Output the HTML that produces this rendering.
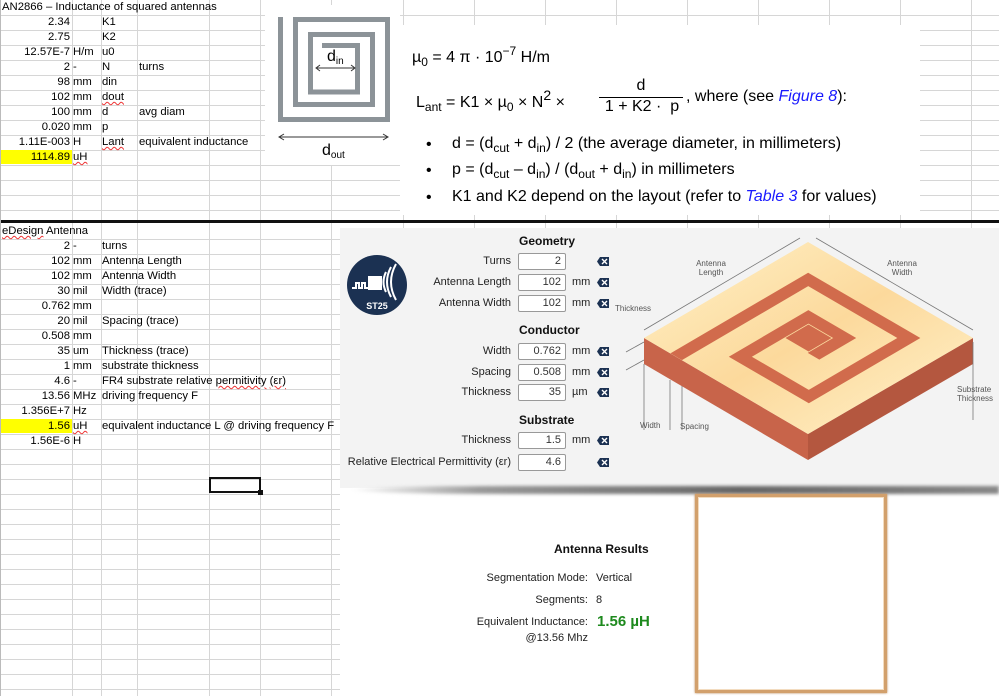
<!DOCTYPE html>
<html><head><meta charset="utf-8"><style>
*{margin:0;padding:0;box-sizing:border-box}
body{width:999px;height:696px;overflow:hidden;background:#fff;font-family:"Liberation Sans",Arial,sans-serif;position:relative;color:#000}
.t{position:absolute;font-size:11.3px;line-height:15px;white-space:nowrap}
.r{text-align:right}
.p{position:absolute;font-size:11px;line-height:14px;white-space:nowrap;color:#222}
.in{position:absolute;width:48px;height:17px;background:#fff;border:1px solid #999;border-radius:2px;font-size:11px;line-height:15px;text-align:right;padding-right:4px;color:#333}
.h{position:absolute;font-size:12px;font-weight:bold;color:#111}
.f{position:absolute;font-size:16px;white-space:nowrap;line-height:18px}
sub{font-size:12px;vertical-align:-4px}
sup{font-size:12px;vertical-align:7px}
.sq{text-decoration:underline wavy #e33;text-decoration-thickness:1px}
</style></head><body>
<svg width="999" height="696" style="position:absolute;left:0;top:0">
<g stroke="#d6d6d6" stroke-width="1">
<path d="M0 15.5H999M0 30.5H999M0 45.5H999M0 60.5H999M0 75.5H999M0 90.5H999M0 105.5H999M0 120.5H999M0 135.5H999M0 150.5H999M0 165.5H999M0 180.5H999M0 195.5H999M0 210.5H999"/>
<path d="M0 239.5H999M0 254.5H999M0 269.5H999M0 284.5H999M0 299.5H999M0 314.5H999M0 329.5H999M0 344.5H999M0 359.5H999M0 374.5H999M0 389.5H999M0 404.5H999M0 419.5H999M0 434.5H999M0 449.5H999M0 464.5H999M0 479.5H999M0 494.5H999M0 509.5H999M0 524.5H999M0 539.5H999M0 554.5H999M0 569.5H999M0 584.5H999M0 599.5H999M0 614.5H999M0 629.5H999M0 644.5H999M0 659.5H999M0 674.5H999M0 689.5H999"/>
<path d="M72.5 0V696M101.5 0V696M137.5 0V696M209.5 0V696M260.5 0V696M331.5 0V696M403.5 0V696M474.5 0V696M545.5 0V696M616.5 0V696M687.5 0V696M758.5 0V696M829.5 0V696M900.5 0V696M971.5 0V696"/>
</g>
<rect x="0" y="220" width="999" height="3" fill="#111"/>
<rect x="0" y="0" width="1" height="696" fill="#bbb"/>
</svg>
<div style="position:absolute;left:400px;top:25px;width:520px;height:190px;background:#fff"></div>
<div style="position:absolute;left:265px;top:5px;width:135px;height:160px;background:#fff"></div>

<div class="t" style="left:2px;top:0">AN2866 – Inductance of squared antennas</div>
<div class="t r" style="left:0;width:70px;top:15px">2.34</div><div class="t" style="left:102px;top:15px">K1</div>
<div class="t r" style="left:0;width:70px;top:30px">2.75</div><div class="t" style="left:102px;top:30px">K2</div>
<div class="t r" style="left:0;width:70px;top:45px">12.57E-7</div><div class="t" style="left:73px;top:45px">H/m</div><div class="t" style="left:102px;top:45px">u0</div>
<div class="t r" style="left:0;width:70px;top:60px">2</div><div class="t" style="left:73px;top:60px">-</div><div class="t" style="left:102px;top:60px">N</div><div class="t" style="left:139px;top:60px">turns</div>
<div class="t r" style="left:0;width:70px;top:75px">98</div><div class="t" style="left:73px;top:75px">mm</div><div class="t" style="left:102px;top:75px">din</div>
<div class="t r" style="left:0;width:70px;top:90px">102</div><div class="t" style="left:73px;top:90px">mm</div><div class="t" style="left:102px;top:90px"><span class="sq">dout</span></div>
<div class="t r" style="left:0;width:70px;top:105px">100</div><div class="t" style="left:73px;top:105px">mm</div><div class="t" style="left:102px;top:105px">d</div><div class="t" style="left:139px;top:105px">avg diam</div>
<div class="t r" style="left:0;width:70px;top:120px">0.020</div><div class="t" style="left:73px;top:120px">mm</div><div class="t" style="left:102px;top:120px">p</div>
<div class="t r" style="left:0;width:70px;top:135px">1.11E-003</div><div class="t" style="left:73px;top:135px">H</div><div class="t" style="left:102px;top:135px"><span class="sq">Lant</span></div><div class="t" style="left:139px;top:135px">equivalent inductance</div>
<div class="t r" style="left:1px;width:71px;top:150px;background:#ffff00;padding-right:2px;height:14px">1114.89</div><div class="t" style="left:73px;top:150px"><span class="sq">uH</span></div>

<svg width="999" height="220" style="position:absolute;left:0;top:0">
<path d="M280.5 17V119.5H387.5V19.5H295.5V104.5H372.5V34.5H310.5V92H357.5V45.5H322" fill="none" stroke="#8c9398" stroke-width="5"/>
<path d="M317 68H354M320 65L316 68L320 71M351 65L355 68L351 71" fill="none" stroke="#333" stroke-width="1"/>
<path d="M280 137H387M284 134L279 137L284 140M383 134L388 137L383 140" fill="none" stroke="#333" stroke-width="1"/>
</svg>
<div class="f" style="left:327px;top:48px">d<sub style="font-size:10px;vertical-align:-3px">in</sub></div>
<div class="f" style="left:322px;top:142px">d<sub style="font-size:10px;vertical-align:-3px">out</sub></div>

<div class="f" style="left:412px;top:42px">µ<sub>0</sub> = 4 π · 10<sup>−7</sup> H/m</div>
<div class="f" style="left:416px;top:86px">L<sub>ant</sub> = K1 × µ<sub>0</sub> × N<sup style="font-size:14px">2</sup> ×</div>
<div class="f" style="left:599px;top:77px;width:84px;text-align:center">d</div>
<div style="position:absolute;left:599px;top:97px;width:84px;height:1px;background:#000"></div>
<div class="f" style="left:599px;top:98px;width:86px;text-align:center">1 + K2 ·&nbsp; p</div>
<div class="f" style="left:686px;top:88px">, where (see <i style="color:#1a1aff">Figure 8</i>):</div>
<div class="f" style="left:426px;top:136px">•</div><div class="f" style="left:452px;top:135px">d = (d<sub>cut</sub> + d<sub>in</sub>) / 2 (the average diameter, in millimeters)</div>
<div class="f" style="left:426px;top:162px">•</div><div class="f" style="left:452px;top:161px">p = (d<sub>cut</sub> – d<sub>in</sub>) / (d<sub>out</sub> + d<sub>in</sub>) in millimeters</div>
<div class="f" style="left:426px;top:189px">•</div><div class="f" style="left:452px;top:188px">K1 and K2 depend on the layout (refer to <i style="color:#1a1aff">Table 3</i> for values)</div>

<div class="t" style="left:2px;top:224px"><span class="sq">eDesign</span> Antenna</div>
<div class="t r" style="left:0;width:70px;top:239px">2</div><div class="t" style="left:73px;top:239px">-</div><div class="t" style="left:102px;top:239px">turns</div>
<div class="t r" style="left:0;width:70px;top:254px">102</div><div class="t" style="left:73px;top:254px">mm</div><div class="t" style="left:102px;top:254px">Antenna Length</div>
<div class="t r" style="left:0;width:70px;top:269px">102</div><div class="t" style="left:73px;top:269px">mm</div><div class="t" style="left:102px;top:269px">Antenna Width</div>
<div class="t r" style="left:0;width:70px;top:284px">30</div><div class="t" style="left:73px;top:284px">mil</div><div class="t" style="left:102px;top:284px">Width (trace)</div>
<div class="t r" style="left:0;width:70px;top:299px">0.762</div><div class="t" style="left:73px;top:299px">mm</div>
<div class="t r" style="left:0;width:70px;top:314px">20</div><div class="t" style="left:73px;top:314px">mil</div><div class="t" style="left:102px;top:314px">Spacing (trace)</div>
<div class="t r" style="left:0;width:70px;top:329px">0.508</div><div class="t" style="left:73px;top:329px">mm</div>
<div class="t r" style="left:0;width:70px;top:344px">35</div><div class="t" style="left:73px;top:344px">um</div><div class="t" style="left:102px;top:344px">Thickness (trace)</div>
<div class="t r" style="left:0;width:70px;top:359px">1</div><div class="t" style="left:73px;top:359px">mm</div><div class="t" style="left:102px;top:359px">substrate thickness</div>
<div class="t r" style="left:0;width:70px;top:374px">4.6</div><div class="t" style="left:73px;top:374px">-</div><div class="t" style="left:102px;top:374px">FR4 substrate relative <span class="sq">permitivity</span> <span class="sq">(εr)</span></div>
<div class="t r" style="left:0;width:70px;top:389px">13.56</div><div class="t" style="left:73px;top:389px">MHz</div><div class="t" style="left:102px;top:389px">driving frequency F</div>
<div class="t r" style="left:0;width:70px;top:404px">1.356E+7</div><div class="t" style="left:73px;top:404px">Hz</div>
<div class="t r" style="left:1px;width:71px;top:419px;background:#ffff00;padding-right:2px;height:14px">1.56</div><div class="t" style="left:73px;top:419px"><span class="sq">uH</span></div><div class="t" style="left:102px;top:419px">equivalent inductance L @ driving frequency F</div>
<div class="t r" style="left:0;width:70px;top:434px">1.56E-6</div><div class="t" style="left:73px;top:434px">H</div>
<div style="position:absolute;left:209px;top:477px;width:52px;height:16px;border:2px solid #111"></div>
<div style="position:absolute;left:258px;top:490px;width:5px;height:5px;background:#111"></div>

<div style="position:absolute;left:340px;top:228px;width:659px;height:260px;background:#f3f3f3"></div>
<div style="position:absolute;left:340px;top:488px;width:659px;height:208px;background:#fff"></div>
<div style="position:absolute;left:350px;top:486px;width:649px;height:8px;background:linear-gradient(90deg,#fff 0%,#999 20%,#666 60%,#888 100%);border-radius:50% 0 0 50%/100% 0 0 100%;filter:blur(1.5px)"></div>

<svg width="70" height="70" style="position:absolute;left:342px;top:250px">
<circle cx="35" cy="35" r="30" fill="#1b3152"/>
<path d="M10 38h4v-5h3v5h3v-5h3v5h4" fill="none" stroke="#fff" stroke-width="2"/>
<rect x="26" y="26" width="14" height="14" fill="#fff"/>
<path d="M44 22q-5 10 0 20M49 17q-8 15 0 30M54 14q-10 18 0 36" fill="none" stroke="#fff" stroke-width="2"/>
<text x="35" y="59" font-size="9" font-weight="bold" fill="#fff" text-anchor="middle" font-family="Liberation Sans">ST25</text>
</svg>

<div class="h" style="left:519px;top:234px">Geometry</div>
<div class="p r" style="left:380px;width:131px;top:254px">Turns</div><div class="in" style="left:518px;top:253px">2</div>
<div class="p r" style="left:380px;width:131px;top:275px">Antenna Length</div><div class="in" style="left:518px;top:274px">102</div><div class="p" style="left:572px;top:275px">mm</div>
<div class="p r" style="left:380px;width:131px;top:296px">Antenna Width</div><div class="in" style="left:518px;top:295px">102</div><div class="p" style="left:572px;top:296px">mm</div>
<div class="h" style="left:519px;top:323px">Conductor</div>
<div class="p r" style="left:380px;width:131px;top:344px">Width</div><div class="in" style="left:518px;top:343px">0.762</div><div class="p" style="left:572px;top:344px">mm</div>
<div class="p r" style="left:380px;width:131px;top:365px">Spacing</div><div class="in" style="left:518px;top:364px">0.508</div><div class="p" style="left:572px;top:365px">mm</div>
<div class="p r" style="left:380px;width:131px;top:385px">Thickness</div><div class="in" style="left:518px;top:384px">35</div><div class="p" style="left:572px;top:385px">µm</div>
<div class="h" style="left:519px;top:413px">Substrate</div>
<div class="p r" style="left:380px;width:131px;top:433px">Thickness</div><div class="in" style="left:518px;top:432px">1.5</div><div class="p" style="left:572px;top:433px">mm</div>
<div class="p r" style="left:340px;width:171px;top:455px">Relative Electrical Permittivity (εr)</div><div class="in" style="left:518px;top:454px">4.6</div>

<svg width="999" height="696" style="position:absolute;left:0;top:0">
<defs><g id="dk"><path d="M3 0H12V9H3L0 4.5Z" fill="#1b3152"/><path d="M5 2L10 7M10 2L5 7" stroke="#fff" stroke-width="1.4"/></g>
<linearGradient id="cr" x1="0" y1="0" x2="1" y2="1"><stop offset="0" stop-color="#fff2c8"/><stop offset=".5" stop-color="#fcd99c"/><stop offset="1" stop-color="#fff3cc"/></linearGradient></defs>
<use href="#dk" x="597" y="257"/><use href="#dk" x="597" y="278"/><use href="#dk" x="597" y="299"/>
<use href="#dk" x="597" y="347"/><use href="#dk" x="597" y="368"/><use href="#dk" x="597" y="388"/>
<use href="#dk" x="597" y="436"/><use href="#dk" x="597" y="458"/>
<polygon points="644,338 808,434 808,460 644,364" fill="#c8644a"/>
<polygon points="808,434 973,338 973,364 808,460" fill="#b4573f"/>
<polygon points="808,242 973,338 808,434 644,338" fill="url(#cr)"/>
<g transform="matrix(-164,96,165,96,808,242)">
<path d="M1 0.195L0.195 0.195L0.195 0.805L0.805 0.805L0.805 0.39L0.39 0.39L0.39 0.61L0.58 0.61" fill="none" stroke="#d16b4c" stroke-width="0.07" stroke-linejoin="miter"/>
<rect x="0.43" y="0.43" width="0.14" height="0.14" fill="#d16b4c"/>
</g>
<g stroke="#777" stroke-width="0.8" fill="none">
<path d="M644 330L800 238M816 238L973 330M644 342L626 352M644 360L626 370M973 342V420M644 364V430M670 380V430M682 386V430"/>
</g>
<text x="711" y="266" font-size="8" fill="#555" text-anchor="middle" font-family="Liberation Sans">Antenna</text>
<text x="711" y="275" font-size="8" fill="#555" text-anchor="middle" font-family="Liberation Sans">Length</text>
<text x="902" y="266" font-size="8" fill="#555" text-anchor="middle" font-family="Liberation Sans">Antenna</text>
<text x="902" y="275" font-size="8" fill="#555" text-anchor="middle" font-family="Liberation Sans">Width</text>
<text x="615" y="311" font-size="8" fill="#555" font-family="Liberation Sans">Thickness</text>
<text x="957" y="392" font-size="8" fill="#555" font-family="Liberation Sans">Substrate</text>
<text x="957" y="401" font-size="8" fill="#555" font-family="Liberation Sans">Thickness</text>
<text x="640" y="428" font-size="8" fill="#555" font-family="Liberation Sans">Width</text>
<text x="680" y="429" font-size="8" fill="#555" font-family="Liberation Sans">Spacing</text>
</svg>

<div class="h" style="left:554px;top:542px">Antenna Results</div>
<div class="p r" style="left:440px;width:148px;top:571px">Segmentation Mode:</div><div class="p" style="left:596px;top:571px">Vertical</div>
<div class="p r" style="left:440px;width:148px;top:593px">Segments:</div><div class="p" style="left:596px;top:593px">8</div>
<div class="p r" style="left:440px;width:148px;top:615px">Equivalent Inductance:</div>
<div style="position:absolute;left:597px;top:613px;font-size:15px;font-weight:bold;color:#1e8a1e">1.56 µH</div>
<div class="p r" style="left:440px;width:148px;top:631px">@13.56 Mhz</div>
<div style="position:absolute;left:695px;top:494px;width:192px;height:199px;border:3px solid #d2a06c;box-shadow:inset 0 0 0 1px #f3dcc0,0 0 2px #b07a45;background:#fff"></div>
</body></html>
